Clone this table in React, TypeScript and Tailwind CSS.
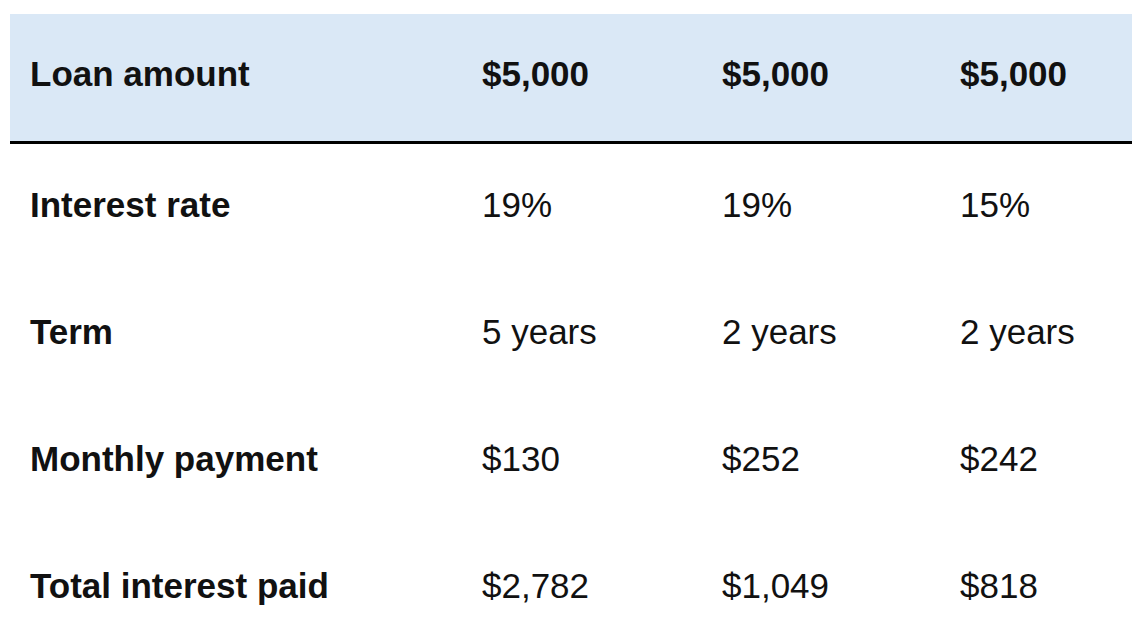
const rows = [
  { label: 'Interest rate', values: ['19%', '19%', '15%'] },
  { label: 'Term', values: ['5 years', '2 years', '2 years'] },
  { label: 'Monthly payment', values: ['$130', '$252', '$242'] },
  { label: 'Total interest paid', values: ['$2,782', '$1,049', '$818'] },
]

export default function App() {
  return (
    <div className="min-h-screen bg-white pt-[14px] pl-[10px] font-['Liberation_Sans',Arial,sans-serif] text-[35px] text-[#111]">
      <div className="w-[1122px]">
        {/* header row */}
        <div className="grid h-[130px] grid-cols-[452px_240px_238px_192px] items-center border-b-[3px] border-black bg-[#dae8f6] pb-[6px] font-bold">
          <div className="pl-5">Loan amount</div>
          <div className="pl-5">$5,000</div>
          <div className="pl-5">$5,000</div>
          <div className="pl-5">$5,000</div>
        </div>

        {rows.map((row) => (
          <div key={row.label} className="grid h-[127px] grid-cols-[452px_240px_238px_192px] items-center pb-1">
            <div className="pl-5 font-bold">{row.label}</div>
            {row.values.map((v, i) => (
              <div key={i} className="pl-5">{v}</div>
            ))}
          </div>
        ))}
      </div>
    </div>
  )
}
